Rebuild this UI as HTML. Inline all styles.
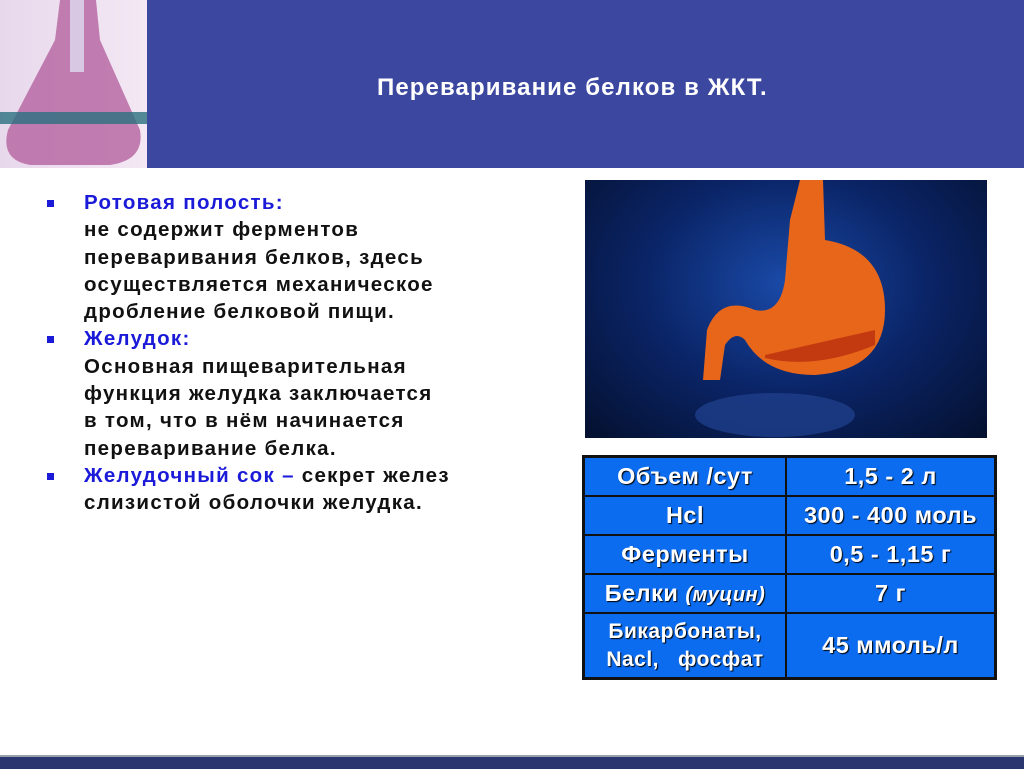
<!DOCTYPE html>
<html><head><meta charset="utf-8"><style>
body{margin:0;width:1024px;height:767px;position:relative;background:#fff;overflow:hidden;font-family:"Liberation Sans",sans-serif}
.hdr{position:absolute;left:147px;top:0;width:877px;height:168px;background:#3c48a0}
.flask{position:absolute;left:0;top:0;width:147px;height:168px;background:linear-gradient(90deg,#e8d8ec,#f4e8f4)}
.title{position:absolute;left:377px;top:74px;color:#fff;font-weight:bold;font-size:24px;letter-spacing:1.1px;white-space:nowrap}
.txt{position:absolute;left:47px;top:189px;font-weight:bold;font-size:20.5px;line-height:27.3px;color:#111;letter-spacing:1.3px;white-space:nowrap}
.txt p{margin:0;padding-left:37px;position:relative}
.txt .b{color:#1a1ad8}
.txt .bl:before{content:"";position:absolute;left:0;top:11px;width:7px;height:7px;background:#1a1ad8}
.img{position:absolute;left:585px;top:180px;width:402px;height:258px;background:radial-gradient(ellipse at 50% 40%,#1a4aa8 0%,#0a2466 50%,#04102e 100%)}
table{position:absolute;left:582px;top:455px;width:415px;border-collapse:collapse;background:#0c6cf0;border:3px solid #111}
td{border:2px solid #111;color:#fff;font-weight:bold;font-size:23.5px;letter-spacing:0.5px;text-align:center;height:37px;padding:0;text-shadow:1px 1px 1px #000;white-space:nowrap}
.foot{position:absolute;left:0;top:755px;width:1024px;height:12px;background:#2a3670;border-top:2px solid #9aa0aa}
</style></head><body>
<div class="flask"><svg width="147" height="168"><path d="M60 0 L96 0 L100 40 L140 130 Q145 160 110 165 L30 165 Q0 160 8 130 L55 40 Z" fill="#b05a9a" opacity=".75"/><rect x="0" y="112" width="147" height="12" fill="#2a7080" opacity=".8"/><rect x="70" y="0" width="14" height="72" fill="#d8c8e4"/></svg></div>
<div class="hdr"></div>
<div class="title">Переваривание белков в ЖКТ.</div>
<div class="txt">
<p class="bl b">Ротовая полость:</p>
<p>не содержит ферментов<br>переваривания белков, здесь<br>осуществляется механическое<br>дробление белковой пищи.</p>
<p class="bl b">Желудок:</p>
<p>Основная пищеварительная<br>функция желудка заключается<br>в том, что в нём начинается<br>переваривание белка.</p>
<p class="bl"><span class="b">Желудочный сок –</span> секрет желез<br>слизистой оболочки  желудка.</p>
</div>
<div class="img"><svg width="402" height="258"><path d="M215 0 L238 0 L240 60 Q300 70 300 130 Q300 190 230 195 Q180 195 160 160 Q150 150 140 165 L135 200 L118 200 L122 150 Q135 115 170 130 Q195 135 200 100 L205 40 Z" fill="#e8661a"/><path d="M180 178 Q230 190 290 165 L290 150 L180 175 Z" fill="#c43a10"/><ellipse cx="190" cy="235" rx="80" ry="22" fill="#1e3f8a" opacity=".8"/></svg></div>
<table>
<tr><td style="width:200px">Объем /сут</td><td>1,5 - 2 л</td></tr>
<tr><td>Hcl</td><td>300 - 400 моль</td></tr>
<tr><td>Ферменты</td><td>0,5 - 1,15 г</td></tr>
<tr><td>Белки <i style="font-size:20px">(муцин)</i></td><td>7 г</td></tr>
<tr><td style="height:63px;font-size:21px;line-height:28px">Бикарбонаты,<br>Nacl,&nbsp;&nbsp; фосфат</td><td>45 ммоль/л</td></tr>
</table>
<div class="foot"></div>
</body></html>
